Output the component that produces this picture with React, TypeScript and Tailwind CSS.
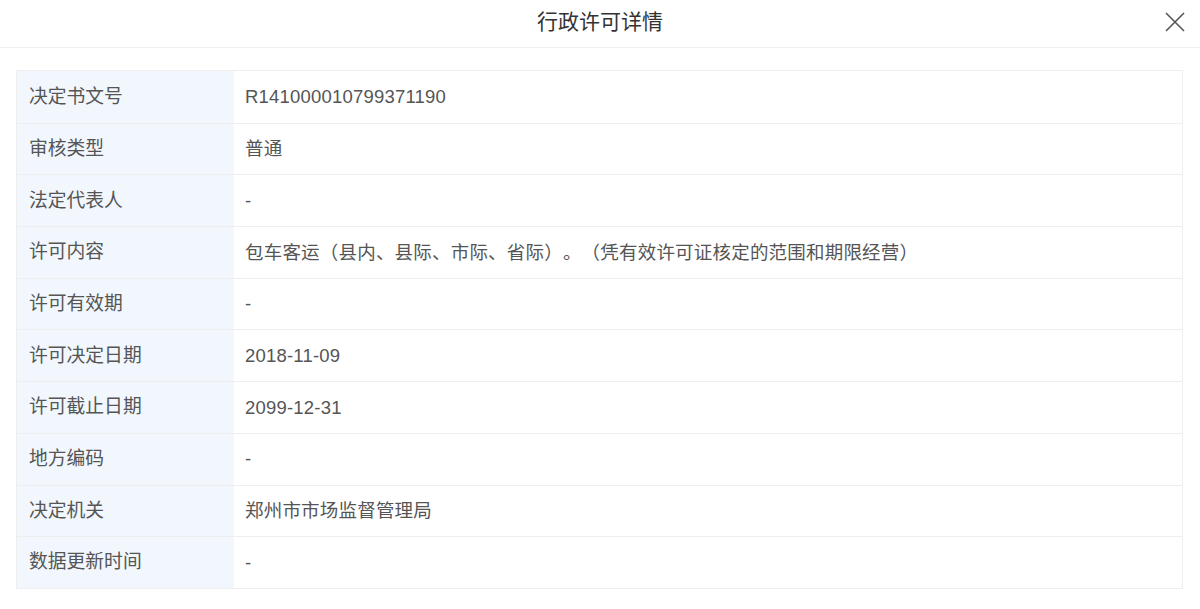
const rows: [string, string][] = [
  ['决定书文号', 'R141000010799371190'],
  ['审核类型', '普通'],
  ['法定代表人', '-'],
  ['许可内容', '包车客运（县内、县际、市际、省际）。（凭有效许可证核定的范围和期限经营）'],
  ['许可有效期', '-'],
  ['许可决定日期', '2018-11-09'],
  ['许可截止日期', '2099-12-31'],
  ['地方编码', '-'],
  ['决定机关', '郑州市市场监督管理局'],
  ['数据更新时间', '-'],
];

export default function App() {
  return (
    <div
      className="w-[1200px] h-[609px] bg-white overflow-hidden [text-spacing-trim:space-all]"
      style={{ fontFamily: '"Liberation Sans", "Noto Sans CJK SC", sans-serif' }}
    >
      {/* Header */}
      <div className="relative h-[48px] flex items-center justify-center border-b border-[#f0f0f0]">
        <h1 className="text-[21px] text-[#333] pb-[3px]">行政许可详情</h1>
        <button className="absolute right-[14px] top-[11px] w-[22px] h-[22px] text-[#555]">
          <svg viewBox="0 0 22 22" className="w-[22px] h-[22px]" fill="none" stroke="currentColor" strokeWidth="1.6">
            <path d="M2 2 L20 20 M20 2 L2 20" />
          </svg>
        </button>
      </div>

      {/* Detail table */}
      <div className="mt-[22px] ml-[16px] w-[1167px] border border-[#eeeeee]">
        {rows.map(([label, value], i) => (
          <div key={label} className={`flex h-[51.7px] ${i > 0 ? 'border-t border-[#eeeeee]' : ''}`}>
            <div className="w-[217px] shrink-0 bg-[#f1f7fd] flex items-center pl-[12px] text-[18.8px] text-[#555]">
              {label}
            </div>
            <div className="flex-1 flex items-center pl-[11px] text-[18.5px] tracking-[0.2px] text-[#555]">
              {value}
            </div>
          </div>
        ))}
      </div>
    </div>
  );
}
